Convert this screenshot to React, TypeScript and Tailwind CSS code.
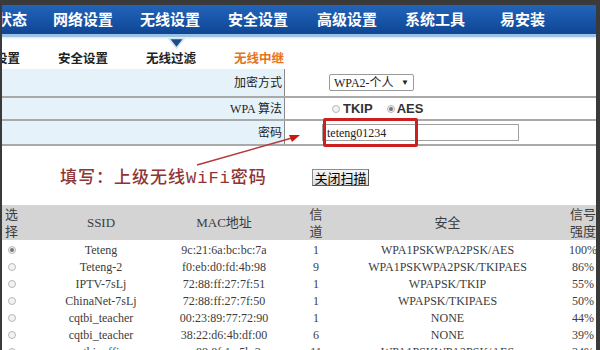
const cjk = { fontFamily: '"Noto Sans CJK SC", "Liberation Sans", sans-serif' };
const serif = { fontFamily: '"Liberation Serif", "Noto Sans CJK SC", serif' };

const navItems = [
  { name: '状态', w: 'w-[56px]' },
  { name: '网络设置', w: 'w-[87px]' },
  { name: '无线设置', w: 'w-[88px]' },
  { name: '安全设置', w: 'w-[89px]' },
  { name: '高级设置', w: 'w-[88px]' },
  { name: '系统工具', w: 'w-[95px]' },
  { name: '易安装', w: 'w-[80px]' },
];

const subItems = ['基本设置', '安全设置', '无线过滤', '无线中继'];

const networks = [
  { ssid: 'Teteng', mac: '9c:21:6a:bc:bc:7a', ch: '1', sec: 'WPA1PSKWPA2PSK/AES', sig: '100%' },
  { ssid: 'Teteng-2', mac: 'f0:eb:d0:fd:4b:98', ch: '9', sec: 'WPA1PSKWPA2PSK/TKIPAES', sig: '86%' },
  { ssid: 'IPTV-7sLj', mac: '72:88:ff:27:7f:51', ch: '1', sec: 'WPAPSK/TKIP', sig: '55%' },
  { ssid: 'ChinaNet-7sLj', mac: '72:88:ff:27:7f:50', ch: '1', sec: 'WPAPSK/TKIPAES', sig: '50%' },
  { ssid: 'cqtbi_teacher', mac: '00:23:89:77:72:90', ch: '1', sec: 'NONE', sig: '44%' },
  { ssid: 'cqtbi_teacher', mac: '38:22:d6:4b:df:00', ch: '6', sec: 'NONE', sig: '39%' },
  { ssid: 'cqtbi_office', mac: 'ec:88:8f:1a:5b:3c', ch: '11', sec: 'WPA1PSKWPA2PSK/AES', sig: '34%' },
];

const Radio = ({ on }: { on?: boolean }) => (
  <span className="inline-flex w-[8px] h-[8px] rounded-full border border-[#b8b8b8] bg-[#f2f2f2] items-center justify-center">
    {on && <span className="w-[4px] h-[4px] rounded-full bg-[#777]" />}
  </span>
);

export default function App() {
  return (
    <div className="relative w-[600px] h-[350px] overflow-hidden bg-white border-t-[5px] border-l-2 border-r-4 border-[#3a3a3a]">
      {/* Top navigation */}
      <div
        className="h-[29px] flex items-center bg-gradient-to-b from-[#2364b9] via-[#1855a8] to-[#0f4593] -ml-[5px] text-white text-[15px] font-bold whitespace-nowrap"
        style={cjk}
      >
        {navItems.map((item) => (
          <div key={item.name} className={`${item.w} shrink-0`}>
            {item.name}
          </div>
        ))}
      </div>
      <div className="h-[3px] bg-[#9cc2e2]" />
      <div className="h-[3px] bg-gradient-to-b from-[#dceaf6] to-white" />

      {/* Sub navigation */}
      <div className="mt-[9px] h-[18px] flex items-center -ml-[32px] text-[12.5px] font-bold text-[#222] whitespace-nowrap" style={cjk}>
        {subItems.map((s, i) => (
          <div key={s} className={`w-[88px] shrink-0 ${i === 3 ? 'text-[#e5731d]' : ''}`}>
            {s}
          </div>
        ))}
      </div>

      {/* Form */}
      <div className="mt-[2px] text-[12px] text-[#222]" style={serif}>
        <div className="flex h-[29px] border-b-2 border-[#a9a9a9]">
          <div className="w-[283px] shrink-0 bg-[#e6f2fa] border-r border-[#8a8a8a] flex items-center justify-end pr-[2px]">加密方式</div>
          <div className="flex items-center pl-[44px]">
            <div className="w-[85px] h-[17px] border border-[#9a9a9a] rounded-[2px] flex items-center justify-between px-[4px] bg-white">
              <span>WPA2-个人</span>
              <span className="text-[8px]">▼</span>
            </div>
          </div>
        </div>
        <div className="flex h-[23px] border-b-2 border-[#a9a9a9]">
          <div className="w-[283px] shrink-0 bg-[#e6f2fa] border-r border-[#8a8a8a] flex items-center justify-end pr-[2px]">WPA 算法</div>
          <div className="flex items-center pl-[47px] text-[13px] font-bold text-[#333]" style={{ fontFamily: '"Liberation Sans", sans-serif' }}>
            <Radio />
            <span className="ml-[3px]">TKIP</span>
            <span className="ml-[14px]" />
            <Radio on />
            <span className="ml-[2px]">AES</span>
          </div>
        </div>
        <div className="flex h-[25px] border-b-2 border-[#a9a9a9]">
          <div className="w-[283px] shrink-0 bg-[#e6f2fa] border-r border-[#8a8a8a] flex items-center justify-end pr-[2px]">密码</div>
          <div className="flex items-center pl-[37px]">
            <div className="w-[197px] h-[17px] border border-[#a0a0a0] bg-white flex items-center pl-[4px]">teteng01234</div>
          </div>
        </div>
      </div>

      {/* Annotation + button */}
      <div className="mt-[20px] h-[22px] flex items-center pl-[58px]">
        <div className="w-[252px] shrink-0 text-[17px] tracking-[1px] text-[#8e3434] font-medium whitespace-nowrap" style={cjk}>
          填写：上级无线<span style={{ fontFamily: '"Liberation Mono", monospace' }}>WiFi</span>密码
        </div>
        <button
          className="h-[17px] w-[57px] border border-[#8c8c8c] border-r-[#555] border-b-[#555] bg-gradient-to-b from-[#f6f6f6] to-[#dcdcdc] text-[13px] text-black leading-none"
          style={cjk}
        >
          关闭扫描
        </button>
      </div>

      {/* Scan result table */}
      <div className="mt-[17px] text-[#3c3c3c]" style={serif}>
        <div className="flex h-[35px] bg-[#d4d4d4] text-[13px] items-center leading-[17px] whitespace-nowrap">
          <div className="w-[23px] shrink-0 pl-[3px]">选<br />择</div>
          <div className="w-[152px] shrink-0 text-center">SSID</div>
          <div className="w-[125px] shrink-0 text-center pr-[31px]">MAC地址</div>
          <div className="w-[28px] shrink-0 text-center">信<br />道</div>
          <div className="w-[235px] shrink-0 text-center">安全</div>
          <div className="w-[36px] shrink-0 text-center">信号<br />强度</div>
        </div>
        <div className="pt-px">
          {networks.map((n, i) => (
            <div key={i} className="flex h-[17px] items-center text-[12px] whitespace-nowrap">
              <div className="w-[23px] shrink-0 pl-[6px] flex items-center">
                <Radio on={i === 0} />
              </div>
              <div className="w-[152px] shrink-0 text-center">{n.ssid}</div>
              <div className="w-[125px] shrink-0 text-center pr-[31px]">{n.mac}</div>
              <div className="w-[28px] shrink-0 text-center">{n.ch}</div>
              <div className="w-[235px] shrink-0 text-center">{n.sec}</div>
              <div className="w-[36px] shrink-0 text-center">{n.sig}</div>
            </div>
          ))}
        </div>
      </div>

      {/* Overlays: nav pointer, red box, arrow */}
      <svg className="absolute left-[166px] top-[33px]" width="17" height="11" viewBox="0 0 17 11">
        <polygon points="1,0.5 16,0.5 8.5,10" fill="#1b4c86" stroke="#cfe2f2" strokeWidth="1.5" />
      </svg>
      <div className="absolute left-[321px] top-[113px] w-[95px] h-[29px] border-[3px] border-[#cc1f1f] rounded-[2px]" />
      <svg className="absolute left-0 top-0 pointer-events-none" width="594" height="345">
        <line x1="195" y1="160" x2="290" y2="133" stroke="#b23a3a" strokeWidth="1.5" />
        <polygon points="298,130 287,130 290,137" fill="#d01515" />
      </svg>
    </div>
  );
}
